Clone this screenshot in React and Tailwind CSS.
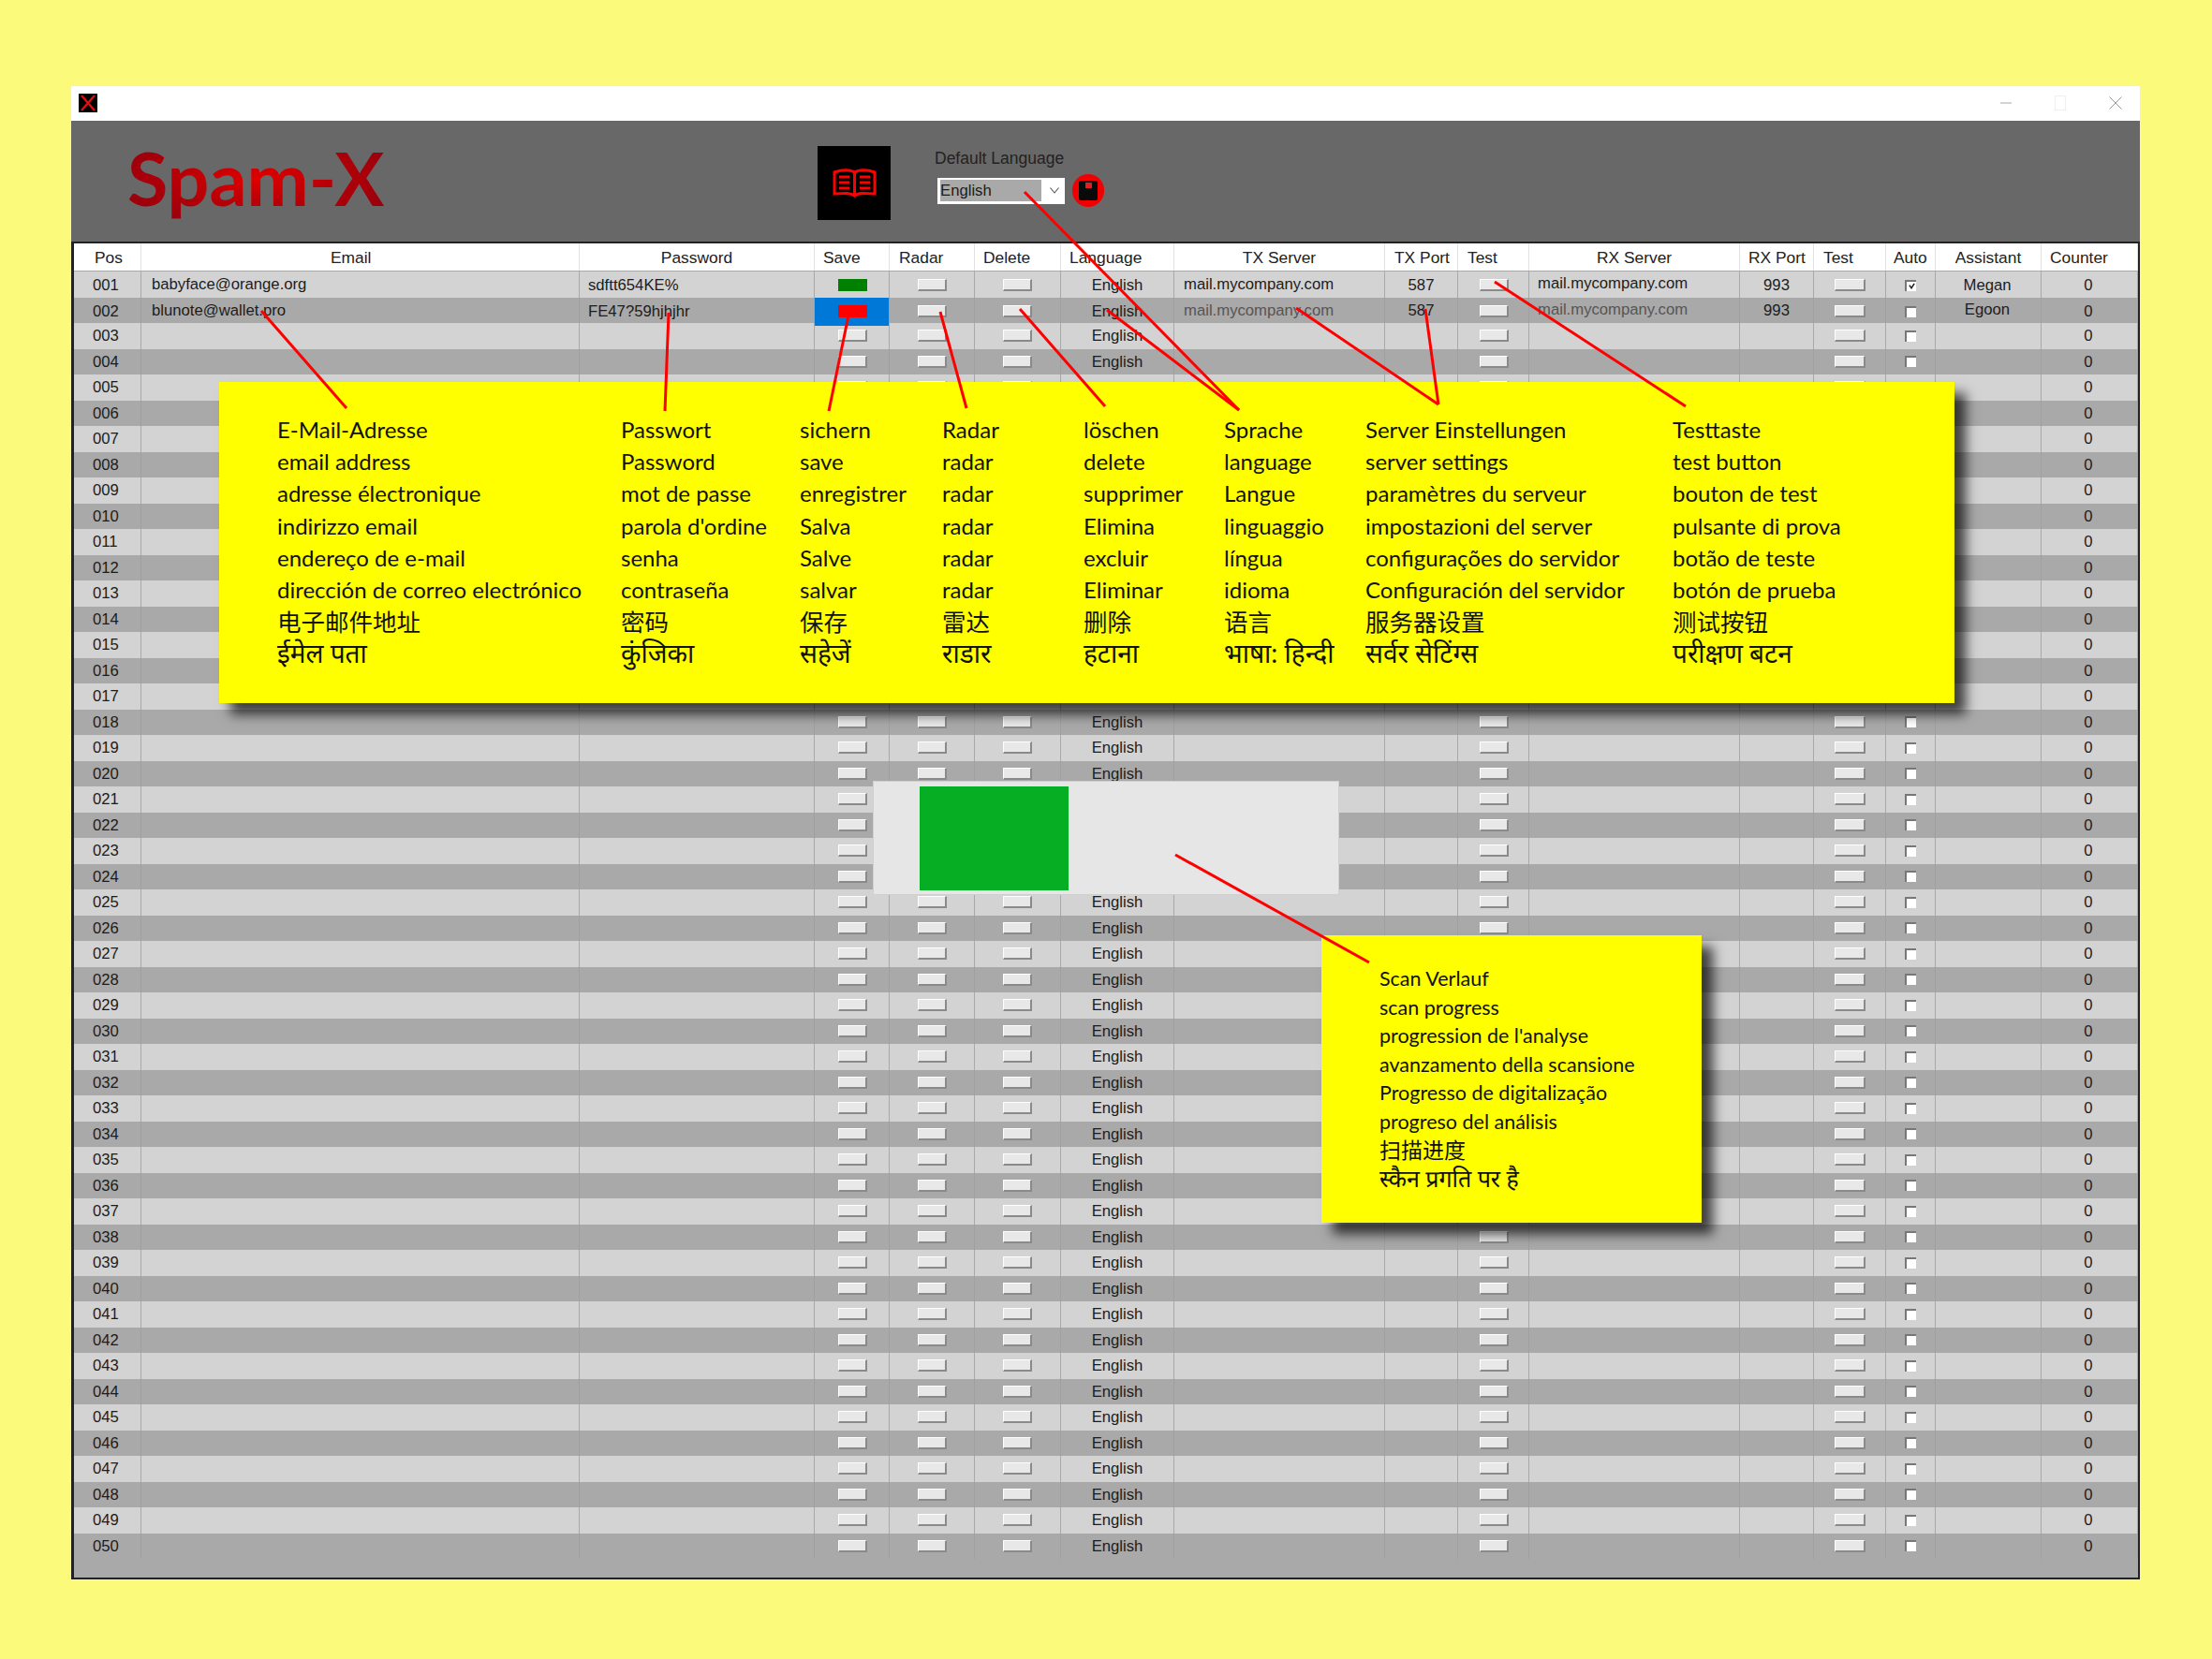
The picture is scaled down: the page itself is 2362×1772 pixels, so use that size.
import React from "react";

const GRID = "grid grid-cols-[72px_468px_251px_80px_91px_92px_121px_225px_78px_76px_225px_79px_77px_53px_113px_103px]";

const HEAD = [
  ["Pos", "pl-[22px]"], ["Email", "pl-[202px]"], ["Password", "justify-center"], ["Save", "pl-[9px]"],
  ["Radar", "pl-[10px]"], ["Delete", "pl-[9px]"], ["Language", "pl-[9px]"], ["TX Server", "justify-center"],
  ["TX Port", "pl-[10px]"], ["Test", "pl-[10px]"], ["RX Server", "justify-center"], ["RX Port", "pl-[9px]"],
  ["Test", "pl-[10px]"], ["Auto", "pl-[8px]"], ["Assistant", "justify-center"], ["Counter", "pl-[9px]"],
];

const NOTE = [
  ["E-Mail-Adresse", "email address", "adresse électronique", "indirizzo email", "endereço de e-mail", "dirección de correo electrónico", "电子邮件地址", "ईमेल पता"],
  ["Passwort", "Password", "mot de passe", "parola d'ordine", "senha", "contraseña", "密码", "कुंजिका"],
  ["sichern", "save", "enregistrer", "Salva", "Salve", "salvar", "保存", "सहेजें"],
  ["Radar", "radar", "radar", "radar", "radar", "radar", "雷达", "राडार"],
  ["löschen", "delete", "supprimer", "Elimina", "excluir", "Eliminar", "删除", "हटाना"],
  ["Sprache", "language", "Langue", "linguaggio", "língua", "idioma", "语言", "भाषा: हिन्दी"],
  ["Server Einstellungen", "server settings", "paramètres du serveur", "impostazioni del server", "configurações do servidor", "Configuración del servidor", "服务器设置", "सर्वर सेटिंग्स"],
  ["Testtaste", "test button", "bouton de test", "pulsante di prova", "botão de teste", "botón de prueba", "测试按钮", "परीक्षण बटन"],
];

const SCAN = ["Scan Verlauf", "scan progress", "progression de l'analyse", "avanzamento della scansione", "Progresso de digitalização", "progreso del análisis", "扫描进度", "स्कैन प्रगति पर है"];

const LINES = [
  [279, 332, 370, 436], [714, 334, 710, 439], [906, 337, 885, 439], [1004, 333, 1032, 436], [1089, 330, 1180, 434],
  [1094, 205, 1323, 438], [1182, 331, 1323, 438], [1384, 329, 1536, 432], [1522, 330, 1536, 432], [1596, 301, 1800, 434],
  [1255, 913, 1462, 1028],
];

function Btn({ color, wide }) {
  const size = wide ? "w-[33px] h-[13px]" : "w-[31px] h-[13px]";
  if (color === "green") return <div className={`${size} bg-[#008000]`} />;
  if (color === "red") return <div className={`${size} bg-[#ff0000]`} />;
  return <div className={`${size} bg-[#e8e8e8] border-t border-l border-t-white border-l-white border-r-2 border-b-2 border-r-[#8a8a8a] border-b-[#8a8a8a]`} />;
}

function Check({ on }) {
  return (
    <div className="w-[12px] h-[12px] bg-white border-t-2 border-l-2 border-t-[#777] border-l-[#777] flex items-center justify-center">
      {on && (
        <svg width="7" height="7" viewBox="0 0 8 8">
          <path d="M1 3 L3.5 6.5 L7 1" fill="none" stroke="#222" strokeWidth="1.8" />
        </svg>
      )}
    </div>
  );
}

function Row({ n }) {
  const dark = n % 2 === 0;
  const bg = dark ? "bg-[#a9a9a9]" : "bg-[#d3d3d3]";
  const sep = dark ? "border-r border-[#a0a0a0]" : "border-r border-[#a9a9a9]";
  const base = `flex items-center ${sep}`;
  const center = `${base} justify-center`;
  const first = n === 1;
  const second = n === 2;
  const covered = (n >= 5 && n <= 17) || (n >= 21 && n <= 24);
  return (
    <div className={`${GRID} h-[27.5px] text-[16.7px] text-[#1c1c1c] ${bg}`}>
      <div className={`${base} pl-[20px]`}>{String(n).padStart(3, "0")}</div>
      <div className={`${base} pl-[11px] pb-[2px]`}>{first ? "babyface@orange.org" : second ? "blunote@wallet.pro" : ""}</div>
      <div className={`${base} pl-[9px]`}>{first ? "sdftt654KE%" : second ? "FE47?59hjhjhr" : ""}</div>
      <div className={`${center} pl-[2px] ${second ? "bg-[#0078d7]" : ""}`}>
        <Btn color={first ? "green" : second ? "red" : ""} />
      </div>
      <div className={center}><Btn /></div>
      <div className={center}><Btn /></div>
      <div className={center}>{covered ? "" : "English"}</div>
      <div className={`${base} pl-[10px] pb-[2px] ${second ? "text-[#555555]" : ""}`}>{first || second ? "mail.mycompany.com" : ""}</div>
      <div className={`${center} ${second ? "pb-[3px]" : ""}`}>{first || second ? "587" : ""}</div>
      <div className={`${center} pl-[2px]`}><Btn /></div>
      <div className={`${base} pl-[9px] pb-[4px] ${second ? "text-[#555555]" : ""}`}>{first || second ? "mail.mycompany.com" : ""}</div>
      <div className={`${center} ${second ? "pb-[3px]" : ""}`}>{first || second ? "993" : ""}</div>
      <div className={`${center} pl-[1px]`}><Btn wide /></div>
      <div className={center}><Check on={first} /></div>
      <div className={`${center} pr-[2px] ${second ? "pb-[5px]" : ""}`}>{first ? "Megan" : second ? "Egoon" : ""}</div>
      <div className={`${center} pr-[2px]`}>0</div>
    </div>
  );
}

function NoteColumn({ lines, className }) {
  return (
    <div className={`flex flex-col ${className}`}>
      {lines.map((t, i) => (
        <div
          key={i}
          className={`flex items-center whitespace-nowrap ${i < 6 ? "h-[34.2px]" : i === 6 ? "h-[33px] text-[25.5px]" : "h-[33px] text-[28px]"}`}
        >
          {t}
        </div>
      ))}
    </div>
  );
}

const NOTE_WIDTHS = ["w-[367px]", "w-[191px]", "w-[152px]", "w-[151px]", "w-[150px]", "w-[151px]", "w-[328px]", "w-[250px]"];

export default function App() {
  return (
    <div className="relative w-[2362px] h-[1772px] overflow-hidden bg-[#fbfa7a] pt-[92px] pl-[76px] [font-family:'Liberation_Sans','Noto_Sans_CJK_SC',sans-serif]">
      <div className="w-[2209px] h-[1595px] flex flex-col">
        {/* Title bar */}
        <div className="h-[37px] bg-white flex items-center pl-[8px] pb-[2px] shrink-0">
          <div className="w-[20px] h-[20px] bg-black">
            <svg width="20" height="20" viewBox="0 0 20 20">
              <path d="M3 2 L17 18 M17 2 L3 18" stroke="#e01010" strokeWidth="2.4" />
            </svg>
          </div>
          <div className="ml-auto flex items-center gap-[46px] pr-[19px]">
            <svg width="12" height="12" viewBox="0 0 12 12"><path d="M0 6 H12" stroke="#a8a8a8" strokeWidth="1" /></svg>
            <svg width="12" height="16" viewBox="0 0 12 16"><rect x="0.5" y="0.5" width="11" height="15" fill="none" stroke="#f0f0f0" /></svg>
            <svg width="14" height="14" viewBox="0 0 14 14"><path d="M0.5 0.5 L13.5 13.5 M13.5 0.5 L0.5 13.5" stroke="#9a9a9a" strokeWidth="1" /></svg>
          </div>
        </div>

        {/* App header */}
        <div className="h-[129px] bg-[#686868] flex items-start pl-[60px] shrink-0">
          <div className="w-[737px] mt-[16px] shrink-0">
            <span className="inline-block text-[79px] leading-[90px] font-bold [font-family:Lato,sans-serif] text-transparent bg-clip-text bg-[radial-gradient(ellipse_at_center,#e00000_0%,#b00008_50%,#8a0010_100%)]">
              Spam-X
            </span>
          </div>
          <div className="w-[78px] h-[79px] mt-[27px] bg-black flex items-center justify-center shrink-0">
            <svg width="47" height="32" viewBox="0 0 47 32" fill="none">
              <path d="M23.5 29 C20 26 14 26 2 27 V4 C10 1 19 1 23.5 4 C28 1 37 1 45 4 V27 C33 26 27 26 23.5 29 Z M23.5 4 V29" stroke="#ff0000" strokeWidth="3" />
              <path d="M7 9 H18 M7 15 H18 M7 21 H18 M29 9 H40 M29 15 H40 M29 21 H40" stroke="#ff0000" strokeWidth="3" />
            </svg>
          </div>
          <div className="ml-[47px] mt-[30px] flex flex-col shrink-0">
            <div className="text-[17.5px] leading-[20px] text-[#222222]">Default Language</div>
            <div className="flex items-center mt-[7px]">
              <div className="ml-[3px] w-[136px] h-[28px] bg-white flex items-center pl-[3px]">
                <div className="w-[108px] h-[23px] bg-[#a9a9a9] text-[16.7px] leading-[23px] text-[#1c1c1c]">English</div>
                <svg className="ml-[9px]" width="10" height="7" viewBox="0 0 10 7">
                  <path d="M0.5 0.5 L5 6 L9.5 0.5" fill="none" stroke="#555" strokeWidth="1.1" />
                </svg>
              </div>
              <div className="ml-[8px] w-[34px] h-[35px] rounded-full bg-[#f00000] flex items-center justify-center">
                <div className="relative w-[20px] h-[21px] bg-[#0a0a0a] rounded-[2px]">
                  <div className="absolute top-[2px] left-[7px] w-[7px] h-[6px] bg-[#e02020]" />
                </div>
              </div>
            </div>
          </div>
        </div>

        {/* Table frame */}
        <div className="flex-1 bg-[#a9a9a9] border-t-2 border-b-2 border-l-[3px] border-r-2 border-[#222222]">
          <div className={`${GRID} h-[30px] bg-white text-[17.4px] text-[#222222] border-b border-[#a9a9a9]`}>
            {HEAD.map(([t, c], i) => (
              <div key={i} className={`flex items-center pt-[2px] border-r border-[#e2e2e2] ${c}`}>{t}</div>
            ))}
          </div>
          {Array.from({ length: 50 }, (_, i) => <Row key={i} n={i + 1} />)}
        </div>
      </div>

      {/* Yellow annotation */}
      <div className="absolute left-[234px] top-[408px] w-[1853px] h-[343px] bg-[#ffff00] shadow-[12px_12px_12px_rgba(0,0,0,0.7)] pl-[62px] pt-[34px] flex text-[#111111] text-[24px] [font-family:Lato,'Noto_Sans_CJK_SC','Noto_Sans_Devanagari',sans-serif]">
        {NOTE.map((lines, i) => <NoteColumn key={i} lines={lines} className={NOTE_WIDTHS[i]} />)}
      </div>

      {/* Progress panel */}
      <div className="absolute left-[932px] top-[834px] w-[498px] h-[122px] bg-[#e6e6e6] border border-[#d0d0d0] pl-[49px] pt-[5px]">
        <div className="w-[159px] h-[111px] bg-[#06ae24]" />
      </div>

      {/* Second annotation */}
      <div className="absolute left-[1411px] top-[999px] w-[406px] h-[307px] bg-[#ffff00] shadow-[12px_12px_12px_rgba(0,0,0,0.7)] pl-[62px] pt-[31px] text-[#111111] text-[21.5px] [font-family:Lato,'Noto_Sans_CJK_SC','Noto_Sans_Devanagari',sans-serif]">
        {SCAN.map((t, i) => (
          <div key={i} className={`flex items-center whitespace-nowrap h-[30.5px] ${i === 6 ? "text-[23px]" : i === 7 ? "text-[25px]" : ""}`}>{t}</div>
        ))}
      </div>

      {/* Red leader lines */}
      <svg className="absolute left-0 top-0 pointer-events-none" width="2362" height="1772" viewBox="0 0 2362 1772">
        {LINES.map(([a, b, c, d], i) => (
          <line key={i} x1={a} y1={b} x2={c} y2={d} stroke="#ff0000" strokeWidth="3" />
        ))}
      </svg>
    </div>
  );
}
